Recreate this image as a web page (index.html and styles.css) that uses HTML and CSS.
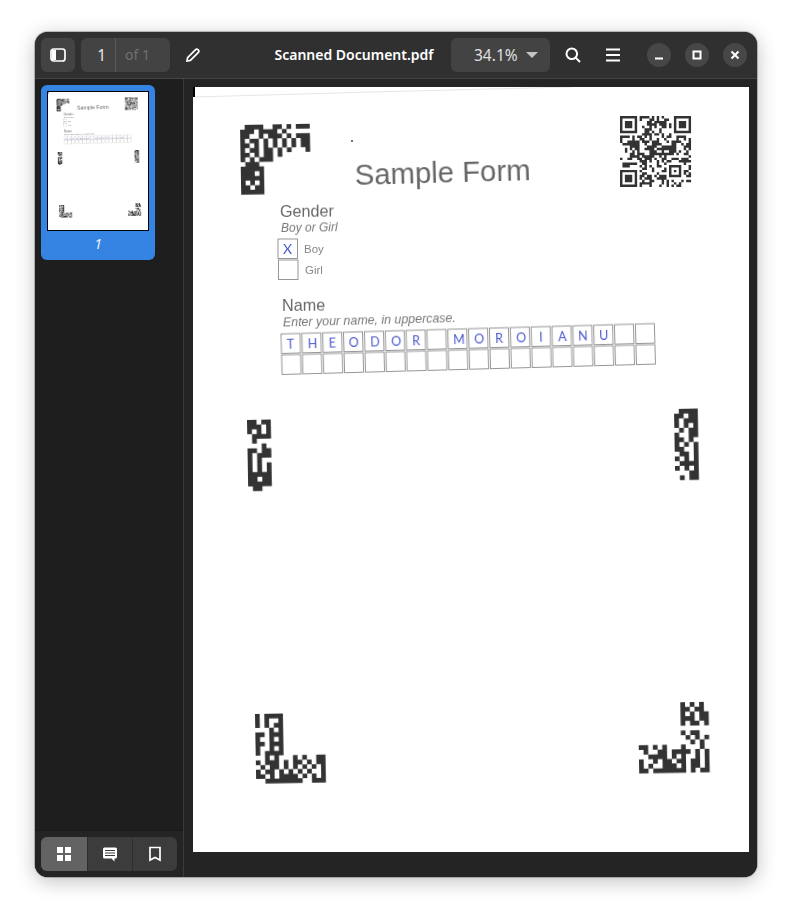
FILE: index.html
```html
<!DOCTYPE html>
<html lang="en">
<head>
  <meta charset="UTF-8">
  <title>Scanned Document.pdf</title>
  <link rel="stylesheet" href="styles.css">
</head>
<body>
  <div class="window">
    <header class="toolbar">
      <button class="btn filled" aria-label="Toggle sidebar">
        <svg class="icon" viewBox="0 0 16 16"><rect x="1" y="2" width="14" height="12" rx="2.5" class="line"/><rect x="2" y="3" width="4" height="10" class="solid"/></svg>
      </button>
      <div class="page-entry">
        <span class="page-num">1</span>
        <span class="page-of">of 1</span>
      </div>
      <button class="btn" aria-label="Annotate">
        <svg class="icon" viewBox="0 0 16 16"><path class="line" d="M2 14l.6-3.4 8-8a1.6 1.6 0 0 1 2.3 0l.5.5a1.6 1.6 0 0 1 0 2.3l-8 8z"/></svg>
      </button>
      <div class="title">Scanned Document.pdf</div>
      <div class="zoom-combo">
        <span>34.1%</span>
        <span class="arrow"></span>
      </div>
      <button class="btn" aria-label="Search">
        <svg class="icon" viewBox="0 0 16 16"><circle class="line thick" cx="6.8" cy="6.8" r="5.3"/><path class="line thick" d="M10.6 10.6l4.4 4.4"/></svg>
      </button>
      <button class="btn" aria-label="Menu">
        <svg class="icon" viewBox="0 0 16 16"><path class="line thick" d="M1 2.500h14M1 8h14M1 13.500h14"/></svg>
      </button>
      <div class="win-controls">
        <button class="win-btn" aria-label="Minimize">
          <svg class="win-icon" viewBox="0 0 16 16"><path class="line" d="M4 11.500h8"/></svg>
        </button>
        <button class="win-btn" aria-label="Maximize">
          <svg class="win-icon" viewBox="0 0 16 16"><rect class="line" x="4.500" y="4.500" width="7" height="7"/></svg>
        </button>
        <button class="win-btn" aria-label="Close">
          <svg class="win-icon" viewBox="0 0 16 16"><path class="line" d="M4.500 4.500l7 7M11.500 4.500l-7 7"/></svg>
        </button>
      </div>
    </header>

    <div class="content">
      <aside class="sidebar">
        <div class="thumb-list">
          <div class="thumb-card">
            <svg class="thumb-page" viewBox="0 0 556 765" preserveAspectRatio="none"><use href="#sheet-art"/></svg>
            <div class="thumb-label">1</div>
          </div>
        </div>
        <div class="sidebar-foot">
          <div class="segments">
            <button class="segment active" aria-label="Thumbnails">
              <svg class="icon" viewBox="0 0 16 16"><path class="solid" d="M1 1h6v6H1zM9 1h6v6H9zM1 9h6v6H1zM9 9h6v6H9z"/></svg>
            </button>
            <button class="segment" aria-label="Annotations">
              <svg class="icon" viewBox="0 0 16 16"><path class="solid" fill-rule="evenodd" d="M2.500 1.500h11A1.500 1.500 0 0 1 15 3v8a1.500 1.500 0 0 1-1.500 1.500h-1v3l-3-3h-7A1.500 1.500 0 0 1 1 11V3a1.500 1.500 0 0 1 1.500-1.500zM3 4v1h10V4zM3 6.500v1h10v-1zM3 9v1h10V9z"/></svg>
            </button>
            <button class="segment" aria-label="Bookmarks">
              <svg class="icon" viewBox="0 0 16 16"><path class="line" d="M3 1.500h10V14l-5-2.500L3 14z"/></svg>
            </button>
          </div>
        </div>
      </aside>

      <main class="viewer">
        <svg class="sheet" viewBox="0 0 556 765">
          <g id="sheet-art">
            <rect class="paper" width="556" height="765"/>
            <path class="scan-edge" d="M0 0h2v10H0z"/>
            <path class="scan-line" d="M2 10L180 5L378 0"/>
            <circle class="speck" cx="159" cy="54" r="1"/>
            <g id="marks" class="marks"></g>

            <text class="form-title" transform="translate(162 98) rotate(-1.6)">Sample Form</text>
            <text class="heading" transform="translate(87 130) rotate(-.5)">Gender</text>
            <text class="hint" transform="translate(88 145) rotate(-.8)">Boy or Girl</text>
            <rect class="box" x="85" y="152" width="19.500" height="19.500"/>
            <rect class="box" x="85.500" y="173" width="19.500" height="19.500"/>
            <text class="ink big" x="90" y="167">X</text>
            <text class="option" x="111" y="166">Boy</text>
            <text class="option" x="112" y="187">Girl</text>
            <text class="heading" transform="translate(89 224) rotate(-.5)">Name</text>
            <text class="hint wide" transform="translate(90 239.500) rotate(-1.5)">Enter your name, in uppercase.</text>
            <g transform="translate(88 247) rotate(-1.6)">
              <g id="cells"></g>
              <text class="ink" y="15">
                <tspan x="5.500">T</tspan>
                <tspan x="26.500">H</tspan>
                <tspan x="47.500">E</tspan>
                <tspan x="67.500">O</tspan>
                <tspan x="89">D</tspan>
                <tspan x="110">O</tspan>
                <tspan x="131">R</tspan>
                <tspan x="172">M</tspan>
                <tspan x="193">O</tspan>
                <tspan x="214">R</tspan>
                <tspan x="235">O</tspan>
                <tspan x="258">I</tspan>
                <tspan x="277">A</tspan>
                <tspan x="297">N</tspan>
                <tspan x="318">U</tspan>
              </text>
            </g>
          </g>
        </svg>
      </main>
    </div>
  </div>
  <script src="app.js"></script>
</body>
</html>
```

FILE: styles.css
```css
* { box-sizing: border-box; }
body { margin: 0; padding: 32px 35px; background: #fff; font-family: "Noto Sans", sans-serif; color: #fff; }
button { border: 0; padding: 0; background: none; color: inherit; display: flex; align-items: center; justify-content: center; }

.window { width: 722px; height: 845px; display: flex; flex-direction: column; border-radius: 13px; overflow: hidden; background: #242424; box-shadow: 0 4px 20px rgba(0,0,0,0.26), 0 0 0 1px rgba(0,0,0,0.22); }

.toolbar { height: 47px; flex: none; display: flex; align-items: center; gap: 6px; padding: 0 10px 1px 6px; background: #303030; border-bottom: 1px solid #454545; }
.btn { width: 34px; height: 34px; flex: none; border-radius: 6px; }
.btn.filled { background: #434343; }
.icon { width: 16px; height: 16px; display: block; }
.line { fill: none; stroke: #fff; stroke-width: 1.7; }
.line.thick { stroke-width: 2; }
.solid { fill: #fff; }

.page-entry { width: 89px; height: 34px; flex: none; display: flex; align-items: center; border-radius: 6px; background: #434343; font-size: 14px; }
.page-num { width: 35px; height: 100%; line-height: 34px; padding-right: 9px; text-align: right; border-right: 1px solid #5a5a5a; color: #e8e8e8; font-size: 15.500px; }
.page-of { margin-left: 9px; color: #707070; }

.title { flex: 1; margin-left: 47px; text-align: center; font-size: 14px; font-weight: 600; white-space: nowrap; }

.zoom-combo { width: 99px; height: 34px; flex: none; display: flex; align-items: center; padding-left: 23px; gap: 8px; border-radius: 6px; background: #434343; font-size: 15.500px; color: #e0e0e0; }
.arrow { width: 0; height: 0; border-left: 6px solid transparent; border-right: 6px solid transparent; border-top: 6px solid #c4c4c4; }

.win-controls { display: flex; gap: 14px; margin-left: 11px; }
.win-btn { width: 24px; height: 24px; border-radius: 50%; background: #474747; }
.win-icon { width: 16px; height: 16px; display: block; }
.win-icon .line { stroke-width: 2; }

.content { flex: 1; display: flex; min-height: 0; }

.sidebar { width: 149px; flex: none; display: flex; flex-direction: column; background: #1e1e1e; border-right: 1px solid #3a3a3a; }
.thumb-list { flex: 1; padding: 6px; }
.thumb-card { width: 114px; height: 175px; padding: 6px; border-radius: 6px; background: #3584e4; }
.thumb-page { width: 102px; height: 140px; display: block; border: 1px solid #000; background: #fff; }
.thumb-label { text-align: center; font-size: 14px; font-style: italic; line-height: 24px; margin-top: 1px; color: #e6f0fc; }

.sidebar-foot { padding: 6px; background: #242424; border-top: 1px solid #1a1a1a; }
.segments { width: 136px; height: 34px; display: flex; border-radius: 6px; overflow: hidden; background: #3c3c3c; }
.segment { flex: 1; border-left: 1px solid #2e2e2e; }
.segment.active { flex: none; width: 46px; border-left: 0; background: #636363; }

.viewer { flex: 1; padding: 8px 8px 25px 9px; background: #242424; }
.sheet { width: 556px; height: 765px; display: block; }

.paper { fill: #fff; }
.scan-edge { fill: #000; }
.scan-line { fill: none; stroke: #e6e6e6; stroke-width: 1; }
.speck { fill: #444; }
.marks { fill: #333; filter: blur(0.6px); }

.form-title { font-family: "Liberation Sans", sans-serif; font-size: 29.300px; fill: #666; filter: blur(0.3px); }
.heading { font-family: "Liberation Sans", sans-serif; font-size: 16.200px; fill: #666; filter: blur(0.3px); }
.hint { font-family: "Liberation Sans", sans-serif; font-size: 12px; font-style: italic; fill: #777; filter: blur(0.25px); }
.hint.wide { font-size: 12.400px; }
.option { font-family: "Liberation Sans", sans-serif; font-size: 11.500px; fill: #888; filter: blur(0.25px); }
.ink { font-family: "Lato", sans-serif; font-size: 12.500px; font-weight: 400; fill: #4a58cc; filter: blur(0.2px); }
.ink.big { font-size: 14px; }
.box { fill: none; stroke: #8c8c8c; stroke-width: 0.9; filter: blur(0.2px); }
```

FILE: app.js
```js
// scanned timing marks, one string per row of modules
const marks = [
  { x: 47, y: 38, size: 4.65, rows: [
    ".1111..11.1.111",
    "111.1111.1.....",
    "11..1.111.1.111",
    "1.11.1.1.1.1.11",
    "11.1.1.1.1.1.11",
    "1.11.11.1.1...1",
    "11.1.11.1......",
    "1.1.111........",
    ".111...........",
    "11111..........",
    "111.1..........",
    "11111..........",
    "1.1.1..........",
    "11.11..........",
    "11111.........."
  ] },
  { x: 54, y: 333, size: 4.75, rows: [
    "11.11", "111.1", "1.1.1", ".1111", ".1...", "...1.", "11.11", "1.111",
    "1.1..", "1.1.1", "1.1.1", "11111", "11.11", "11111", ".11.."
  ] },
  { x: 481, y: 322, size: 4.75, rows: [
    ".1111", "11.11", "1.111", "1.1.1", ".1.11", "1..11", "11.1.", "1.1.1",
    "11..1", ".11.1", "1.1.1", ".1111", "1.1.1", "...11", ".1.11"
  ] },
  { x: 62, y: 627, size: 4.65, rows: [
    "1.1111.........",
    "1.1..1.........",
    "1.1.11.........",
    "...1.1.........",
    "11.111.........",
    "1..1.1.........",
    "11.111.........",
    "1..1.1.........",
    "1.1111.........",
    "..1.1...1.1..11",
    "1.111.1.11.1.11",
    ".1.11.1.1.1.1.1",
    "1.11.1.1.1.1..1",
    "11.1.1111.1.1.1",
    "..11111111..111"
  ] },
  { x: 445, y: 616, size: 4.7, rows: [
    ".........1.1.1.",
    ".........11.11.",
    ".........1.1.11",
    ".........111.11",
    ".........1.11.1",
    "...............",
    ".........1.11..",
    "..........1.1.1",
    "...........1.1.",
    "11.1.1...1...1.",
    ".1..11.1111.1.1",
    "..1111.1.1..1.1",
    "1..1.11.11.11.1",
    "1.1..111.1.11.1",
    "11.1111111.1.11"
  ] }
];

function modulesPath(rows) {
  let d = "";
  rows.forEach((row, y) => {
    [...row].forEach((cell, x) => {
      if (cell === "1") d += `M${x} ${y}h1v1h-1z`;
    });
  });
  return d;
}

// version 3 QR layout, the data modules are made up
function qrRows() {
  const n = 29;
  let seed = 2463534;
  const rows = [];
  for (let y = 0; y < n; y++) {
    let row = "";
    for (let x = 0; x < n; x++) {
      seed ^= seed << 13;
      seed ^= seed >>> 17;
      seed ^= seed << 5;
      row += (seed >>> 0) % 100 < 50 ? "1" : ".";
    }
    rows.push([...row]);
  }
  const block = (left, top, size, radius) => {
    for (let y = -1; y <= size; y++) {
      for (let x = -1; x <= size; x++) {
        const cy = top + y, cx = left + x;
        if (cy < 0 || cx < 0 || cy >= n || cx >= n) continue;
        const dist = Math.max(Math.abs(x - radius), Math.abs(y - radius));
        rows[cy][cx] = dist === radius + 1 || dist === radius - 1 ? "." : "1";
      }
    }
  };
  block(0, 0, 7, 3);
  block(22, 0, 7, 3);
  block(0, 22, 7, 3);
  block(20, 20, 5, 2);
  return rows.map(r => r.join(""));
}

const ns = "http://www.w3.org/2000/svg";
const marksGroup = document.getElementById("marks");

marks.concat({ x: 427, y: 29, size: 2.45, rows: qrRows(), flat: true }).forEach(mark => {
  const path = document.createElementNS(ns, "path");
  const turn = mark.flat ? "" : " rotate(-1)";
  path.setAttribute("transform", `translate(${mark.x} ${mark.y})${turn} scale(${mark.size})`);
  path.setAttribute("d", modulesPath(mark.rows));
  marksGroup.appendChild(path);
});

const cells = document.getElementById("cells");
for (let row = 0; row < 2; row++) {
  for (let col = 0; col < 18; col++) {
    const box = document.createElementNS(ns, "rect");
    box.setAttribute("class", "box");
    box.setAttribute("x", col * 20.85);
    box.setAttribute("y", row * 21);
    box.setAttribute("width", 19);
    box.setAttribute("height", 19.5);
    cells.appendChild(box);
  }
}
```
